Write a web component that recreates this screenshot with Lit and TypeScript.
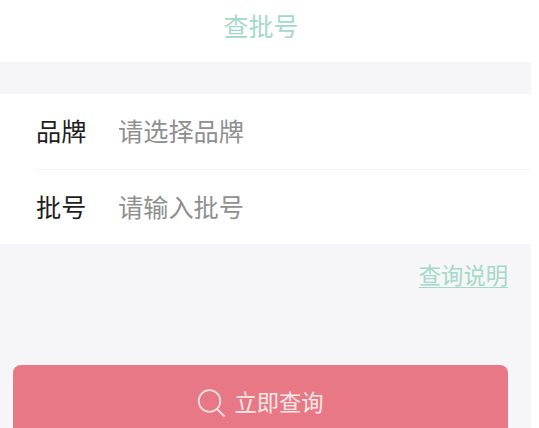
import { LitElement, html, css } from "lit";
import { customElement } from "lit/decorators.js";

@customElement("app-root")
export class AppRoot extends LitElement {
  static styles = css`
    :host {
      display: block;
      width: 539px;
      height: 428px;
      overflow: hidden;
      background: #ffffff;
      font-family: "Liberation Sans", "Noto Sans CJK SC", sans-serif;
    }
    .page {
      width: 531px;
      height: 428px;
      overflow: hidden;
      background: #f6f5f7;
      display: flex;
      flex-direction: column;
    }
    .nav {
      height: 62px;
      flex: none;
      background: #fff;
      display: flex;
      align-items: center;
      justify-content: center;
      color: #a3d9c8;
      font-size: 25px;
      padding: 0 9px 13px 0;
      box-sizing: border-box;
    }
    .form {
      flex: none;
      margin-top: 32px;
      background: #fff;
      padding-left: 36px;
    }
    .row {
      height: 75px;
      display: flex;
      align-items: center;
      font-size: 25.2px;
      box-sizing: border-box;
      padding-bottom: 4px;
    }
    .row + .row {
      border-top: 1px solid #f6f3f5;
      padding-bottom: 2px;
    }
    .label {
      width: 82px;
      color: #1d1d1d;
    }
    .ph {
      color: #8f8f8f;
    }
    .link-row {
      flex: none;
      display: flex;
      justify-content: flex-end;
      padding: 18px 23px 0 0;
    }
    .link {
      color: #a3d9c8;
      font-size: 22.3px;
      line-height: 29px;
      text-decoration: underline;
      text-underline-offset: 3px;
      text-decoration-thickness: 1px;
    }
    .btn {
      margin: 74px 23px 0 13px;
      height: 100px;
      flex: none;
      background: #e97887;
      border-radius: 8px;
      display: flex;
      justify-content: center;
      align-items: flex-start;
      gap: 9px;
      padding: 24px 0 0 0;
      box-sizing: border-box;
      color: #fbe9e6;
      font-size: 22.3px;
      line-height: 29px;
    }
    svg {
      display: block;
      width: 28px;
      height: 28px;
    }
  `;

  render() {
    return html`
      <div class="page">
        <div class="nav">查批号</div>
        <div class="form">
          <div class="row">
            <span class="label">品牌</span><span class="ph">请选择品牌</span>
          </div>
          <div class="row">
            <span class="label">批号</span><span class="ph">请输入批号</span>
          </div>
        </div>
        <div class="link-row"><span class="link">查询说明</span></div>
        <div class="btn">
          <svg viewBox="0 0 28 28" fill="none" stroke="#fbe3df" stroke-width="1.8">
            <circle cx="12.5" cy="12" r="10.8"></circle>
            <path d="M20 20 L27 27" stroke-linecap="round"></path>
          </svg>
          <span>立即查询</span>
        </div>
      </div>
    `;
  }
}
